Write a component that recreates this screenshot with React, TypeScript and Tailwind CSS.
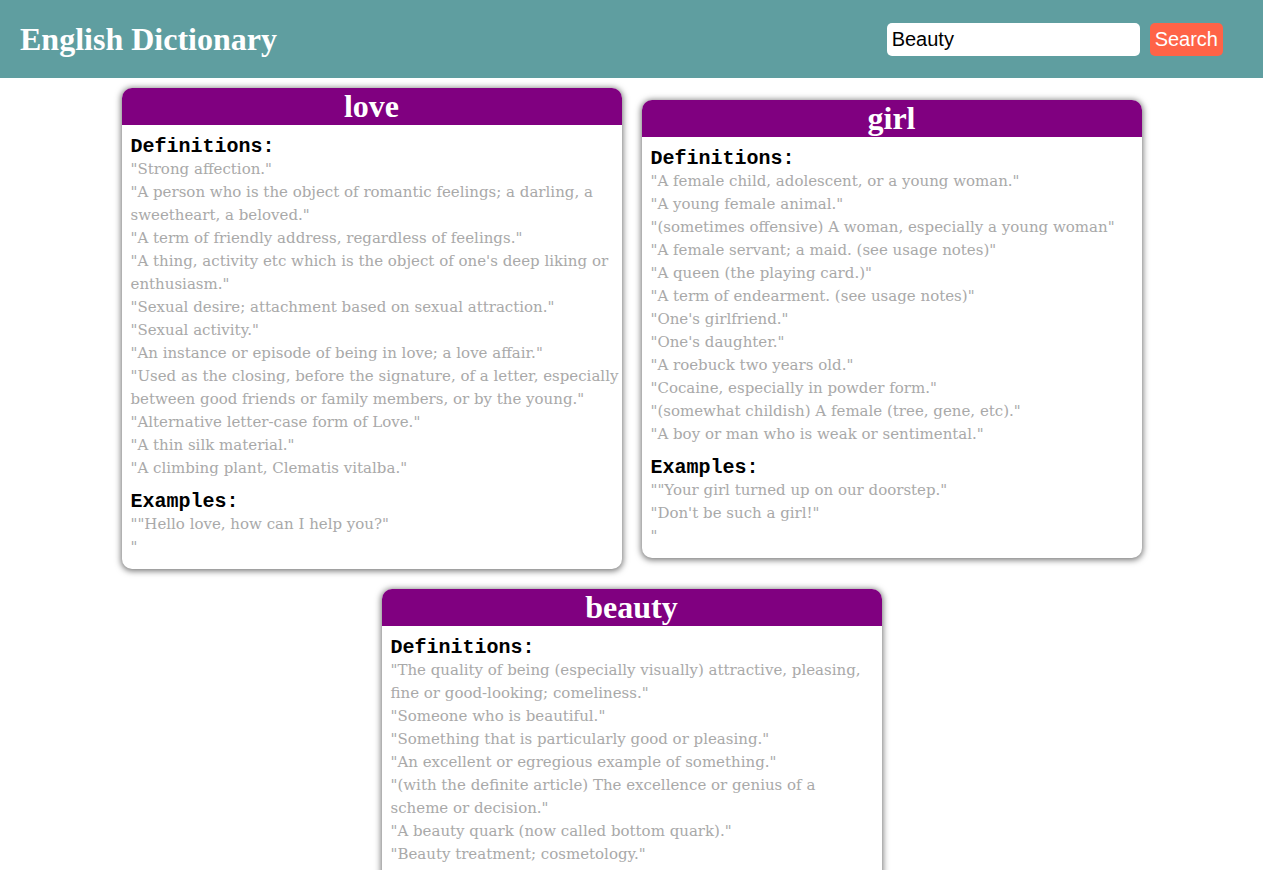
import React from "react";

type Entry = { word: string; defs: string[][]; examples: string[] };

const entries: Entry[] = [
  {
    word: "love",
    defs: [
      ['"Strong affection."'],
      ['"A person who is the object of romantic feelings; a darling, a', 'sweetheart, a beloved."'],
      ['"A term of friendly address, regardless of feelings."'],
      ['"A thing, activity etc which is the object of one\'s deep liking or', 'enthusiasm."'],
      ['"Sexual desire; attachment based on sexual attraction."'],
      ['"Sexual activity."'],
      ['"An instance or episode of being in love; a love affair."'],
      ['"Used as the closing, before the signature, of a letter, especially', 'between good friends or family members, or by the young."'],
      ['"Alternative letter-case form of Love."'],
      ['"A thin silk material."'],
      ['"A climbing plant, Clematis vitalba."'],
    ],
    examples: ['""Hello love, how can I help you?"', '"'],
  },
  {
    word: "girl",
    defs: [
      ['"A female child, adolescent, or a young woman."'],
      ['"A young female animal."'],
      ['"(sometimes offensive) A woman, especially a young woman"'],
      ['"A female servant; a maid. (see usage notes)"'],
      ['"A queen (the playing card.)"'],
      ['"A term of endearment. (see usage notes)"'],
      ['"One\'s girlfriend."'],
      ['"One\'s daughter."'],
      ['"A roebuck two years old."'],
      ['"Cocaine, especially in powder form."'],
      ['"(somewhat childish) A female (tree, gene, etc)."'],
      ['"A boy or man who is weak or sentimental."'],
    ],
    examples: ['""Your girl turned up on our doorstep."', '"Don\'t be such a girl!"', '"'],
  },
  {
    word: "beauty",
    defs: [
      ['"The quality of being (especially visually) attractive, pleasing,', 'fine or good-looking; comeliness."'],
      ['"Someone who is beautiful."'],
      ['"Something that is particularly good or pleasing."'],
      ['"An excellent or egregious example of something."'],
      ['"(with the definite article) The excellence or genius of a', 'scheme or decision."'],
      ['"A beauty quark (now called bottom quark)."'],
      ['"Beauty treatment; cosmetology."'],
    ],
    examples: ['""What a beauty!"', '"'],
  },
];

const serif = { fontFamily: '"DejaVu Serif", serif' };
const mono = { fontFamily: '"Liberation Mono", "Courier New", monospace' };
const times = { fontFamily: '"Liberation Serif", "Times New Roman", serif' };

function Card({ e }: { e: Entry }) {
  return (
    <div className="m-[10px] w-[500px] rounded-[10px] bg-white shadow-[0_1px_6px_1px_rgba(0,0,0,0.55)]">
      <div
        className="h-[37px] rounded-t-[10px] bg-[#800080] text-center text-[32px] font-bold leading-[37px] text-white"
        style={times}
      >
        {e.word}
      </div>
      <div className="px-[9px] pt-[10px] pb-[10px]">
        <div className="text-[20px] font-bold leading-[23px] text-black" style={mono}>
          Definitions:
        </div>
        <div className="text-[15px] leading-[23px] text-[#a9a9a9]" style={serif}>
          {e.defs.map((d, i) => (
            <div key={i}>
              {d.map((line, j) => (
                <div key={j} className="whitespace-nowrap">
                  {line}
                </div>
              ))}
            </div>
          ))}
        </div>
        <div className="mt-[10px] text-[20px] font-bold leading-[23px] text-black" style={mono}>
          Examples:
        </div>
        <div className="text-[15px] leading-[23px] text-[#a9a9a9]" style={serif}>
          {e.examples.map((d, i) => (
            <div key={i} className="whitespace-nowrap">
              {d}
            </div>
          ))}
        </div>
      </div>
    </div>
  );
}

export default function App() {
  return (
    <div className="min-h-screen bg-white">
      <header className="flex h-[78px] items-center justify-between bg-[#5f9ea0] pl-[20px] pr-[40px]">
        <h1 className="text-[32px] font-bold text-white" style={times}>
          English Dictionary
        </h1>
        <div className="flex items-center gap-[10px]" style={{ fontFamily: '"Liberation Sans", Arial, sans-serif' }}>
          <input
            defaultValue="Beauty"
            className="h-[33px] w-[253px] rounded-[5px] border-0 bg-white px-[5px] text-[20px] text-black outline-none"
          />
          <button className="h-[33px] rounded-[5px] bg-[#ff6347] px-[5px] text-[20px] text-white">Search</button>
        </div>
      </header>
      <main className="flex flex-wrap items-center justify-center">
        {entries.map((e) => (
          <Card key={e.word} e={e} />
        ))}
      </main>
    </div>
  );
}
